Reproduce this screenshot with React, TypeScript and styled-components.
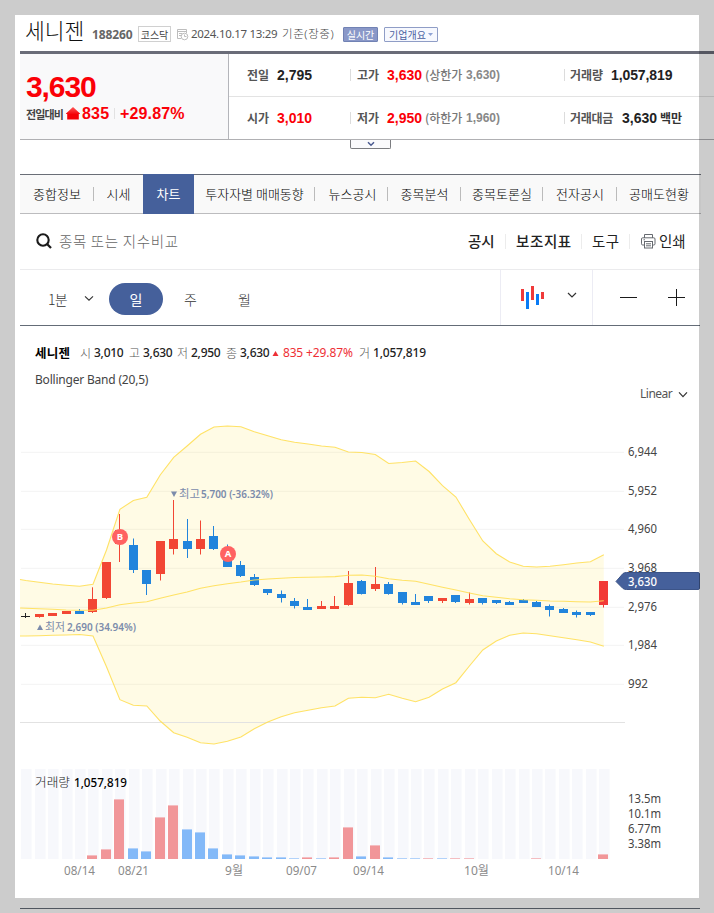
import React from 'react';
import styled, { createGlobalStyle } from 'styled-components';

const Global = createGlobalStyle`
  * { box-sizing: border-box; }
  body { margin: 0; background: #fff; font-family: "Noto Sans", "Noto Sans CJK KR", sans-serif; }
`;

const Page = styled.div`
  position: relative;
  width: 714px;
  height: 913px;
  overflow: hidden;
  background: #fff;
`;

const Frame = styled.div`
  position: absolute;
  inset: 0;
  border: 15px solid rgba(0, 0, 0, 0.2);
  pointer-events: none;
`;

type LabelProps = { $w?: number; $ml?: number; $size?: number; $color?: string; $weight?: number; $ls?: number; $top?: number };

const Label = styled.span<LabelProps>`
  flex: none;
  width: ${(p) => (p.$w ? `${p.$w}px` : 'auto')};
  margin-left: ${(p) => p.$ml ?? 0}px;
  margin-top: ${(p) => p.$top ?? 0}px;
  font-family: "Noto Sans CJK KR", sans-serif;
  font-size: ${(p) => p.$size ?? 12}px;
  font-weight: ${(p) => p.$weight ?? 400};
  letter-spacing: ${(p) => p.$ls ?? 0}px;
  color: ${(p) => p.$color ?? '#222'};
  line-height: 20px;
  white-space: nowrap;
`;

const Num = styled(Label)`
  font-family: "Liberation Sans", sans-serif;
`;

const Latin = styled(Label)`
  font-family: "Noto Sans", "Noto Sans CJK KR", sans-serif;
`;

const Header = styled.header`
  display: flex;
  align-items: center;
  height: 51px;
  padding: 17px 0 0 25px;
`;

const Chip = styled.span<{ $filled?: boolean; $w: number; $ml: number; $grey?: boolean }>`
  display: flex;
  flex: none;
  align-items: center;
  justify-content: center;
  gap: 2px;
  width: ${(p) => p.$w}px;
  height: ${(p) => (p.$grey ? 16 : 15)}px;
  margin-left: ${(p) => p.$ml}px;
  border: 1px solid ${(p) => (p.$grey ? '#d0d0d0' : p.$filled ? '#7182b4' : '#8f9dc6')};
  border-radius: ${(p) => (p.$grey ? 0 : 1)}px;
  background: ${(p) => (p.$filled ? '#8a98c8' : p.$grey ? '#fff' : '#f6f8fe')};
  color: ${(p) => (p.$filled ? '#fff' : p.$grey ? '#444' : '#4a5f9e')};
  font: 400 10px/13px "Noto Sans CJK KR", sans-serif;
  white-space: nowrap;
`;

const Summary = styled.section`
  display: flex;
  margin-left: 20px;
  height: 89px;
  border-top: 3px solid #6a6c78;
  border-bottom: 1px solid #b0b0b3;
`;

const PriceBox = styled.div`
  width: 209px;
  flex: none;
  padding: 19px 0 0 6px;
  background: #f9f9fa;
  border-right: 1px solid #b4b5ba;
`;

const BigPrice = styled.div`
  height: 27px;
  color: #fb0007;
  font: 700 30px/27px "Liberation Sans", sans-serif;
  letter-spacing: -1.1px;
`;

const Line = styled.div`
  display: flex;
  align-items: center;
  height: 27px;
`;

const Bar = styled.i<{ $h: number; $ml: number; $color?: string }>`
  flex: none;
  width: 1px;
  height: ${(p) => p.$h}px;
  margin-left: ${(p) => p.$ml}px;
  background: ${(p) => p.$color ?? '#dcdcdc'};
`;

const Facts = styled.div`
  flex: 1;
  display: grid;
  grid-template-rows: 42px 43px;
`;

const FactRow = styled.div`
  display: flex;
  align-items: center;
  & + & { border-top: 1px solid #e3e3e3; }
  padding-left: 18px;
`;

const Toggle = styled.div`
  display: flex;
  align-items: center;
  justify-content: center;
  width: 41px;
  height: 9px;
  margin: 0 0 0 350px;
  border: 1px solid #7b7c80;
  border-radius: 0 0 2px 2px;
  border-top: 0;
  background: #fafafc;
`;

const Tabs = styled.nav`
  display: grid;
  grid-template-columns: 74px 49px 51px 121px 73px 73px 82px 74px 83px;
  width: 681px;
  height: 40px;
  margin: 25px 0 0 20px;
  border-top: 1px solid #6a6e77;
  border-bottom: 1px solid #bcbcbe;
  background: #f9f9f9;
`;

const Tab = styled.a<{ $active?: boolean; $bar?: boolean; $shift?: number }>`
  display: flex;
  align-items: center;
  justify-content: center;
  margin: -1px 0;
  padding-left: ${(p) => p.$shift ?? 0}px;
  color: ${(p) => (p.$active ? '#fff' : '#000')};
  background: ${(p) => (p.$active ? '#45609b' : `linear-gradient(#bbb, #bbb) ${p.$bar ? 'right center / 1px 14px' : '0 0 / 0 0'} no-repeat`)};
  font: ${(p) => (p.$active ? 400 : 300)} 13px/20px "Noto Sans CJK KR", sans-serif;
  white-space: nowrap;
`;

const SearchRow = styled.div`
  display: flex;
  align-items: center;
  width: 680px;
  height: 56px;
  margin-left: 20px;
  padding: 0 0 1px 16px;
  border-bottom: 1px solid #ebebed;
`;

const Tools = styled.div`
  display: flex;
  width: 680px;
  height: 56px;
  margin-left: 20px;
  border-bottom: 1px solid #646c77;
`;

const Periods = styled.div`
  display: flex;
  align-items: center;
  width: 480px;
  padding: 2px 0 0 28px;
`;

const DayPill = styled.span`
  display: flex;
  align-items: center;
  justify-content: center;
  width: 54px;
  height: 32px;
  margin-left: 15px;
  border-radius: 16px;
  background: #45609b;
  color: #fff;
  font: 400 14px/20px "Noto Sans CJK KR", sans-serif;
`;

const ToolCell = styled.div<{ $w: number }>`
  width: ${(p) => p.$w}px;
  border-left: 1px solid #ececf4;
`;

const Legend = styled.div`
  display: flex;
  align-items: center;
  height: 20px;
  margin: 17px 0 0 35px;
`;

const Indicator = styled.div`
  display: flex;
  align-items: center;
  height: 20px;
  margin: 7px 0 0 35px;
`;

const Scale = styled.div`
  display: flex;
  align-items: center;
  height: 20px;
  margin: -6px 0 0 640px;
`;

const Drawing = styled.svg<{ $ml?: number }>`
  display: block;
  flex: none;
  margin-left: ${(p) => p.$ml ?? 0}px;
`;

const ChevronDown = ({ w = 9, h = 5, color = '#333', s = 1.1 }: { w?: number; h?: number; color?: string; s?: number }) => (
  <Drawing width={w + 2} height={h + 2} viewBox={`-1 -1 ${w + 2} ${h + 2}`}>
    <path d={`M0 0.3L${w / 2} ${h - 0.3}L${w} 0.3`} fill="none" stroke={color} strokeWidth={s} />
  </Drawing>
);

const RED = '#f24634';
const BLUE = '#2184dc';
const X0 = 25.5;
const STEP = 13.442;
const cx = (i: number) => Math.round(X0 + STEP * i - 0.3) + 0.5;

// [direction, body top, body bottom, wick top, wick bottom]
const candles: [string, number, number, number, number][] = [
  ['k', 616, 617, 613, 618], ['r', 614, 617, 614, 617.7], ['r', 613, 616, 613, 616], ['r', 611, 614, 611, 614],
  ['b', 611, 614, 609, 614], ['r', 599, 612, 587.3, 613], ['r', 562, 598, 562, 599], ['r', 530, 544, 514, 562],
  ['b', 545, 570, 538.5, 573], ['b', 570, 584, 570, 595], ['r', 541, 574, 541, 580.5], ['r', 539, 549, 500, 554.5],
  ['b', 541, 549, 519, 558], ['r', 539, 549, 520.5, 554.5], ['b', 536, 549, 526, 550], ['b', 555, 567, 544.5, 567],
  ['b', 565, 576, 561, 577], ['b', 577, 585, 574, 586], ['b', 589, 593, 589, 595], ['b', 594, 598, 590.5, 602.5],
  ['b', 601, 606, 598, 608.5], ['b', 607, 610, 599, 610], ['r', 606, 609, 601, 609], ['r', 606, 609, 596, 609],
  ['r', 583, 605, 571, 605.7], ['b', 581, 594, 580, 594.5], ['r', 584, 589, 567, 591], ['b', 584, 594, 582, 594.7],
  ['b', 592, 603, 592, 604.5], ['b', 602, 605, 594, 605], ['b', 596, 601, 596, 603], ['r', 598, 601, 598, 603],
  ['b', 595, 602, 595, 603], ['r', 599, 603, 592.5, 604.5], ['b', 598, 603, 598, 604.5], ['b', 600, 603, 600, 604],
  ['b', 602, 605, 601, 605], ['b', 600, 603, 599, 603], ['b', 602, 607, 601, 607], ['b', 606, 610, 604.5, 616.5],
  ['b', 609, 613, 608, 613], ['b', 612, 615, 610.5, 617.5], ['b', 612, 615, 612, 616], ['r', 581, 605, 581, 607.5],
];

const upper = [580.5, 582.3, 584, 585.2, 586.3, 584.3, 550, 509.3, 500.5, 497.3, 475, 457.3, 446, 434.3, 427, 426, 426.7, 431.7, 435.7, 439.7, 442.3, 444, 446, 447.3, 452, 452.5, 454.5, 463.5, 462.5, 461, 471.5, 485.7, 497, 519.5, 541, 553.7, 562, 566.3, 567, 566.3, 564.7, 563, 561.7, 554.7];
const middle = [608.3, 608.8, 609.3, 610, 610.3, 610.3, 608, 604.7, 603, 601.7, 598.3, 595, 592, 588.3, 585.7, 583.7, 582, 580, 579, 578.3, 577.5, 577.2, 577, 576.6, 575.3, 575, 576.3, 578.7, 580.3, 581.3, 584.3, 587.3, 590, 593, 595.7, 597.3, 598.7, 599.7, 600.3, 601, 601.3, 601.7, 602, 600.7];
const lower = [636, 635.7, 635.3, 635, 634.5, 636, 666.7, 699.7, 705.3, 706, 721, 732.7, 737.3, 742.7, 744, 741.3, 737, 728.7, 722, 716.7, 712.7, 710.3, 707.7, 706, 698.3, 697.2, 697.7, 694.3, 698.3, 701.7, 697.3, 689, 682.7, 666, 650, 641, 635.3, 633, 633.7, 635.7, 637.7, 639.7, 642, 646.3];

const trace = (ys: number[], first: number) => [`20,${first}`, ...ys.map((y, i) => `${(X0 + STEP * i + 0.3).toFixed(1)},${y}`)];
const upperPts = trace(upper, 579.5);
const middlePts = trace(middle, 608);
const lowerPts = trace(lower, 636);

// [index, direction, bar top]
const volumes: [number, string, number][] = [
  [5, 'r', 855], [6, 'r', 849], [7, 'r', 799], [8, 'b', 848], [9, 'b', 851], [10, 'r', 817], [11, 'r', 805],
  [12, 'b', 829], [13, 'b', 832], [14, 'b', 848], [15, 'b', 854], [16, 'b', 855], [17, 'b', 856], [18, 'b', 857],
  [19, 'b', 857], [20, 'b', 858], [21, 'r', 857], [22, 'b', 858], [23, 'r', 857], [24, 'r', 827], [25, 'b', 856],
  [26, 'r', 845], [27, 'b', 857], [28, 'b', 858], [29, 'b', 858], [30, 'r', 858], [31, 'b', 858], [32, 'r', 858],
  [33, 'r', 858], [38, 'r', 858], [43, 'r', 854],
];

const ChartText = styled.text<{ $color?: string; $weight?: number; $size?: number }>`
  font-family: "Noto Sans", "Noto Sans CJK KR", sans-serif;
  font-size: ${(p) => p.$size ?? 12}px;
  font-weight: ${(p) => p.$weight ?? 400};
  fill: ${(p) => p.$color ?? '#444'};
`;

const Fit = ({ x, y, w, children, ...rest }: { x: number; y: number; w: number; children: string; $color?: string; $weight?: number; $size?: number }) => (
  <ChartText x={x} y={y} textLength={w} lengthAdjust="spacingAndGlyphs" {...rest}>{children}</ChartText>
);

const Marker = ({ x, y, label }: { x: number; y: number; label: string }) => (
  <g>
    <circle cx={x} cy={y} r={8} fill="#ff6262" />
    <ChartText x={x} y={y + 3.4} textAnchor="middle" $size={9.5} $weight={700} $color="#fff">{label}</ChartText>
  </g>
);

const priceAxis: [number, string, number][] = [
  [452.3, '6,944', 29], [491.3, '5,952', 29], [529.3, '4,960', 29], [568.3, '3,968', 29],
  [607.3, '2,976', 29], [645.3, '1,984', 29], [684.3, '992', 20],
];

const Chart = () => (
  <Drawing width={714} height={494} viewBox="0 404 714 494">
    {priceAxis.map(([y, label]) => <rect key={label} x={21} y={Math.floor(y) - 0.2} width={603} height={1} fill="#f3f3f3" />)}
    <polygon points={[...upperPts, ...lowerPts.slice().reverse()].join(' ')} fill="#ffe45c" fillOpacity={0.16} />
    <rect x={20} y={722} width={605} height={1} fill="#e2e2e2" />
    {candles.map(([d, top, bottom, high, low], i) => {
      const color = d === 'k' ? '#222' : d === 'r' ? (i === 43 ? '#f23937' : RED) : BLUE;
      const x = cx(i);
      return (
        <g key={i} fill={color}>
          <rect x={x - 0.5} y={high} width={1} height={low - high} />
          <rect x={x - 4.5} y={top} width={9} height={bottom - top} />
        </g>
      );
    })}
    {[upperPts, middlePts, lowerPts].map((pts, i) => (
      <polyline key={i} points={pts.join(' ')} fill="none" stroke="#ffdf57" strokeOpacity={0.9} strokeWidth={1.1} />
    ))}
    <Marker x={120} y={537} label="B" />
    <Marker x={228} y={554} label="A" />
    <path d="M171 491.5h6l-3 5.5z" fill="#7b8bab" />
    <Fit x={179} y={498} w={21} $size={11.5} $weight={400} $color="#7b8bab">최고</Fit>
    <Fit x={201} y={498} w={72} $size={11.5} $weight={600} $color="#7b8bab">5,700 (-36.32%)</Fit>
    <path d="M37 630h6l-3 -5.5z" fill="#7b8bab" />
    <Fit x={45} y={631} w={20} $size={11.5} $weight={400} $color="#7b8bab">최저</Fit>
    <Fit x={67} y={631} w={69} $size={11.5} $weight={600} $color="#7b8bab">2,690 (34.94%)</Fit>
    {priceAxis.map(([y, label, w]) => <Fit key={label} x={628} y={Math.floor(y) + 4} w={w}>{label}</Fit>)}
    <path d="M616 581.5L623 573.5Q624.5 572.5 626.5 572.5H698Q699.5 572.5 699.5 574V588Q699.5 589.5 698 589.5H626.5Q624.5 589.5 623 588.5Z" fill="#45609b" stroke="#3c5488" strokeWidth={1} />
    <Fit x={628} y={586} w={29} $weight={500} $color="#fff">3,630</Fit>

    {candles.map((_, i) => <rect key={i} x={cx(i) - 4.5} y={769} width={10.6} height={90} fill="#f7f8fc" />)}
    {volumes.map(([i, d, top]) => {
      const x = cx(i) - 5.5;
      return (
        <g key={i} fill={d === 'r' ? '#f19699' : '#83b9f8'}>
          <rect x={x} y={top} width={10} height={1} fillOpacity={0.6} />
          <rect x={x} y={top + 1} width={10} height={858 - top} />
        </g>
      );
    })}
    <Fit x={35} y={787} w={35} $weight={300} $color="#222">거래량</Fit>
    <Fit x={74} y={787} w={53} $weight={500} $color="#000">1,057,819</Fit>
    <Fit x={628} y={803} w={33}>13.5m</Fit>
    <Fit x={628} y={818} w={33}>10.1m</Fit>
    <Fit x={628} y={833} w={33}>6.77m</Fit>
    <Fit x={628} y={848} w={33}>3.38m</Fit>
    <Fit x={64} y={875} w={31} $color="#8b8b8b">08/14</Fit>
    <Fit x={118} y={875} w={31} $color="#8b8b8b">08/21</Fit>
    <Fit x={225} y={875} w={18} $color="#8b8b8b">9월</Fit>
    <Fit x={286} y={875} w={31} $color="#8b8b8b">09/07</Fit>
    <Fit x={353} y={875} w={31} $color="#8b8b8b">09/14</Fit>
    <Fit x={464} y={875} w={25} $color="#8b8b8b">10월</Fit>
    <Fit x={548} y={875} w={31} $color="#8b8b8b">10/14</Fit>
  </Drawing>
);

const Footer = styled.div`
  width: 680px;
  height: 1px;
  margin: 10px 0 0 20px;
  background: #646c77;
`;

const tabs: { name: string; active?: boolean; bar?: boolean; shift?: number }[] = [
  { name: '종합정보', bar: true }, { name: '시세' }, { name: '차트', active: true },
  { name: '투자자별 매매동향', bar: true }, { name: '뉴스공시', bar: true, shift: 2 }, { name: '종목분석', bar: true },
  { name: '종목토론실', bar: true }, { name: '전자공시', bar: true }, { name: '공매도현황', shift: 1 },
];

const quotes = [
  { key: '시', value: '3,010', gap: 0, w: 31 }, { key: '고', value: '3,630', gap: 4, w: 30 },
  { key: '저', value: '2,950', gap: 4, w: 31 }, { key: '종', value: '3,630', gap: 4, w: 32 },
];

const Fact = styled(Label)`
  font-weight: ${(p) => p.$weight ?? 700};
  color: ${(p) => p.$color ?? '#555'};
`;

export default function App() {
  return (
    <Page>
      <Global />
      <Header>
        <Label $w={67} $size={21.5} $weight={300} $color="#111" $top={-8}>세니젠</Label>
        <Latin $w={46} $size={12} $weight={700} $ls={-0.1} $color="#666" $top={1}>188260</Latin>
        <Chip $grey $w={33} $ml={0}>코스닥</Chip>
        <Drawing $ml={5} width={13} height={13} viewBox="0 0 13 13">
          <g fill="none" stroke="#bdbdbd">
            <path d="M5 10.5H1.5V1.5H10.5V5M1 3.5H11M3 5.5H6M3 7.5H5" />
            <circle cx="8.5" cy="8.5" r="3.3" />
            <path d="M8.5 6.5V8.5H10.5" />
          </g>
        </Drawing>
        <Latin $w={89} $ml={2} $size={11.5} $ls={-0.3} $color="#555">2024.10.17 13:29</Latin>
        <Latin $w={52} $ml={2} $size={11.5} $weight={300} $ls={0.6} $color="#444">기준(장중)</Latin>
        <Chip $filled $w={35} $ml={9}>실시간</Chip>
        <Chip $w={54} $ml={6}>
          기업개요
          <Drawing width={5} height={3} viewBox="0 0 5 3"><path d="M0 0H5L2.5 3Z" fill="#8fa3d4" /></Drawing>
        </Chip>
      </Header>

      <Summary>
        <PriceBox>
          <BigPrice>3,630</BigPrice>
          <Line>
            <Label $w={40} $size={11} $weight={700} $ls={-0.9} $color="#444">전일대비</Label>
            <Drawing width={14} height={13} viewBox="0 0 14 13">
              <defs>
                <linearGradient id="rise" x2="0" y2="1"><stop offset="0" stopColor="#ff5a5a" /><stop offset="0.6" stopColor="#f40006" /></linearGradient>
              </defs>
              <path d="M7 0L14.5 7H12.8V12.5H1.2V7H-0.5Z" fill="url(#rise)" />
            </Drawing>
            <Num $w={32} $ml={2} $size={16} $weight={700} $ls={0.2} $color="#fb0007">835</Num>
            <Bar $h={11} $ml={0} $color="#e2e2e2" />
            <Num $ml={5} $size={16} $weight={700} $ls={0.15} $color="#fb0007">+29.87%</Num>
          </Line>
        </PriceBox>
        <Facts>
          <FactRow>
            <Fact $w={30}>전일</Fact>
            <Num $w={73} $size={14} $weight={700}>2,795</Num>
            <Bar $h={12} $ml={0} />
            <Fact $w={30} $ml={6}>고가</Fact>
            <Num $w={38} $size={14} $weight={700} $color="#fb0007">3,630</Num>
            <Fact $w={41} $ml={0} $weight={500} $color="#777">(상한가</Fact>
            <Num $size={12} $weight={700} $w={98} $color="#888">3,630)</Num>
            <Bar $h={12} $ml={0} />
            <Fact $w={41} $ml={5}>거래량</Fact>
            <Num $size={14} $weight={700} $ls={-0.1}>1,057,819</Num>
          </FactRow>
          <FactRow>
            <Fact $w={30}>시가</Fact>
            <Num $w={73} $size={14} $weight={700} $color="#fb0007">3,010</Num>
            <Bar $h={12} $ml={0} />
            <Fact $w={30} $ml={6}>저가</Fact>
            <Num $w={38} $size={14} $weight={700} $color="#fb0007">2,950</Num>
            <Fact $w={41} $ml={0} $weight={500} $color="#777">(하한가</Fact>
            <Num $size={12} $weight={700} $w={98} $color="#888">1,960)</Num>
            <Bar $h={12} $ml={0} />
            <Fact $w={52} $ml={5} $ls={-0.3}>거래대금</Fact>
            <Num $size={14} $weight={700} $w={38}>3,630</Num>
            <Fact $color="#333">백만</Fact>
          </FactRow>
        </Facts>
      </Summary>
      <Toggle><ChevronDown w={6} h={3.5} color="#4a5a90" s={1.5} /></Toggle>

      <Tabs>
        {tabs.map((t) => <Tab key={t.name} $active={t.active} $bar={t.bar} $shift={t.shift}>{t.name}</Tab>)}
      </Tabs>

      <SearchRow>
        <Drawing width={16} height={16} viewBox="0 0 16 16">
          <circle cx="7" cy="7" r="5.7" fill="none" stroke="#1b1b1b" strokeWidth="2.1" />
          <path d="M11 11L15 15" stroke="#1b1b1b" strokeWidth="2.3" />
        </Drawing>
        <Label $w={409} $ml={7} $size={14.5} $weight={300} $ls={0.65} $color="#666">종목 또는 지수비교</Label>
        <Label $w={37} $size={14.5} $weight={500}>공시</Label>
        <Bar $h={15} $ml={0} $color="#ececec" />
        <Label $w={65} $ml={10} $size={14.5} $weight={500} $ls={0.6}>보조지표</Label>
        <Bar $h={15} $ml={0} $color="#ececec" />
        <Label $w={37} $ml={10} $size={14.5} $ls={0.5}>도구</Label>
        <Bar $h={15} $ml={0} $color="#ececec" />
        <Drawing $ml={11} width={15} height={15} viewBox="0 0 15 15">
          <g fill="none" stroke="#666a70">
            <path d="M3.5 4V0.5H11.5V4" />
            <rect x="0.5" y="3.8" width="13.5" height="7.2" rx="1.2" />
            <rect x="3.5" y="7.5" width="8" height="6.5" fill="#fff" />
            <path d="M5 9.8H10M5 11.8H10M2.5 5.8H4" />
          </g>
        </Drawing>
        <Label $ml={3} $size={14.5}>인쇄</Label>
      </SearchRow>

      <Tools>
        <Periods>
          <Label $w={36} $size={14} $weight={300} $ls={-0.8} $color="#333">1분</Label>
          <ChevronDown w={8} h={4.5} />
          <DayPill>일</DayPill>
          <Label $ml={21} $w={54} $size={14} $weight={300} $color="#333">주</Label>
          <Label $size={14} $weight={300} $color="#333">월</Label>
        </Periods>
        <ToolCell $w={92}>
          <Drawing width={91} height={55} viewBox="501 270 91 55">
            <g fill="#f03a3a">
              <rect x="521" y="289" width="3" height="12" /><rect x="531" y="286" width="3" height="14" /><rect x="541" y="292" width="3" height="7" />
            </g>
            <g fill="#0a7bf5">
              <rect x="526" y="292" width="3" height="17" /><rect x="536" y="294" width="3" height="11" />
            </g>
            <path d="M568 293L572 297L576 293" fill="none" stroke="#333" strokeWidth="1.2" />
          </Drawing>
        </ToolCell>
        <ToolCell $w={108}>
          <Drawing width={107} height={55} viewBox="593 270 107 55">
            <path d="M620 297.5H637M668 297.5H685M676.5 289V306" stroke="#1b1b1b" />
          </Drawing>
        </ToolCell>
      </Tools>

      <Legend>
        <Label $w={45} $size={12.5} $weight={700} $ls={0.2} $color="#000">세니젠</Label>
        {quotes.map((q) => (
          <React.Fragment key={q.key}>
            <Label $w={14} $ml={q.gap} $weight={300} $color="#555">{q.key}</Label>
            <Latin $w={q.w} $weight={500} $ls={-0.25}>{q.value}</Latin>
          </React.Fragment>
        ))}
        <Drawing width={7} height={5} viewBox="0 0 6 5"><path d="M3 0L6 5H0Z" fill="#ee2f35" /></Drawing>
        <Latin $w={23} $ml={4} $ls={-0.2} $color="#ee2f35">835</Latin>
        <Latin $w={53} $ls={-0.1} $color="#ee2f35">+29.87%</Latin>
        <Label $w={14} $weight={300} $color="#555">거</Label>
        <Latin $weight={500} $ls={-0.2}>1,057,819</Latin>
      </Legend>
      <Indicator><Latin $ls={-0.2} $color="#444">Bollinger Band (20,5)</Latin></Indicator>
      <Scale>
        <Latin $w={38} $ls={-0.5} $color="#555">Linear</Latin>
        <ChevronDown w={8} h={5} s={1.2} />
      </Scale>
      <Chart />
      <Footer />
      <Frame />
    </Page>
  );
}
